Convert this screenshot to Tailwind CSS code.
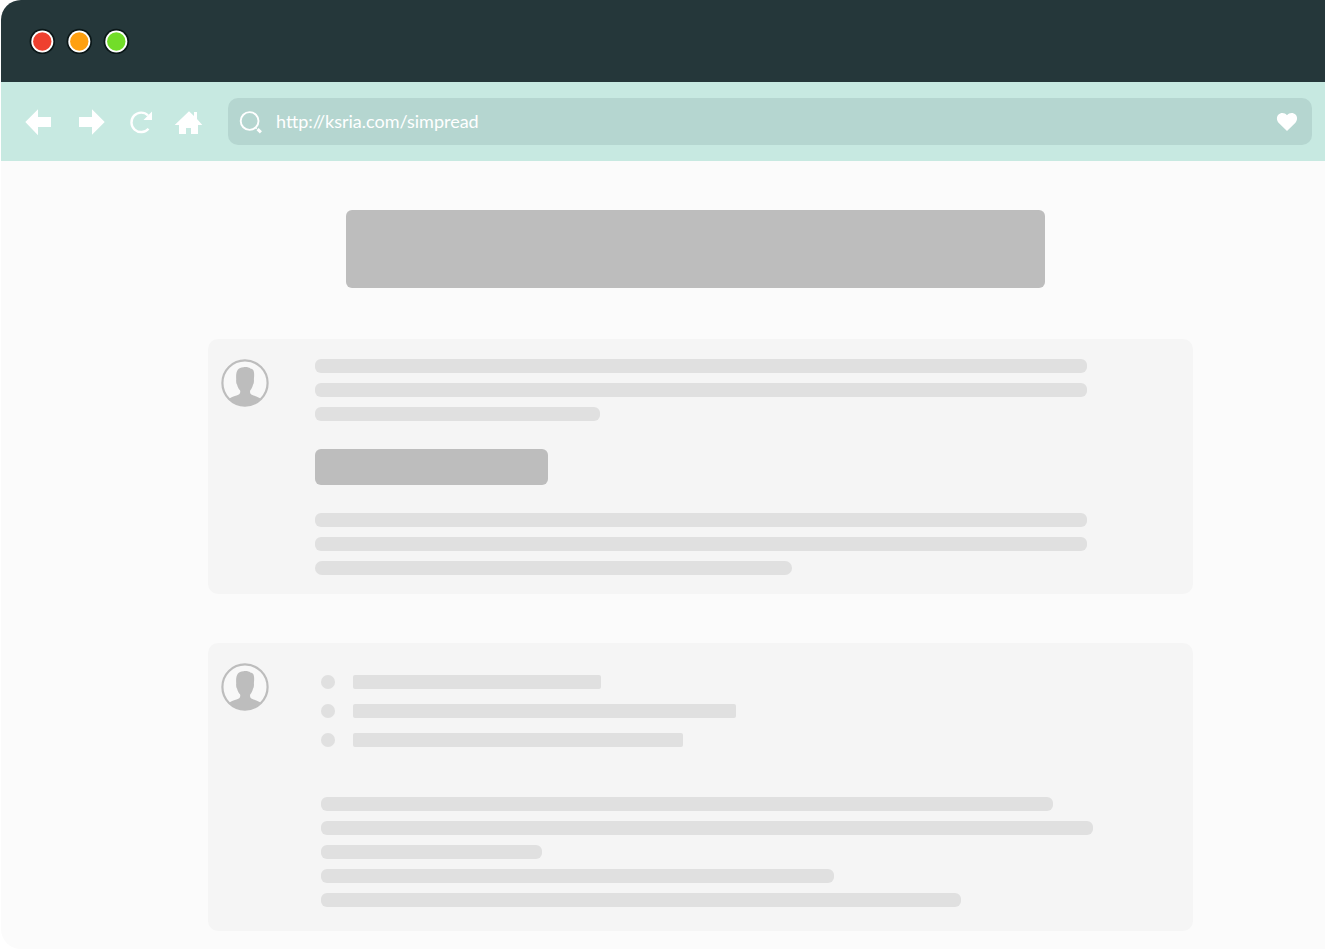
<!DOCTYPE html>
<html lang="en">
<head>
<meta charset="utf-8">
<meta name="viewport" content="width=device-width, initial-scale=1">
<title>SimpRead</title>
<script src="https://cdn.jsdelivr.net/npm/@tailwindcss/browser@4"></script>
</head>
<body class="bg-white pl-px font-['Lato',sans-serif]">
<svg class="hidden" aria-hidden="true">
  <symbol id="avatar" viewBox="0 0 48 48">
    <circle cx="24" cy="24" r="22.600" fill="#f8f8f8" stroke="#bdbdbd" stroke-width="2.200"/>
    <path fill="#bdbdbd" d="M8.500 39.500C11 37.800 15 36.800 17.800 35.600C19.400 34.500 19.500 32.500 19 31.300C17.600 30 16.500 28 16.100 25.800C15.200 24.800 15 22 15.200 20.300C14.700 12 16.500 8.800 22.500 8.200C25.500 7.800 28 8.300 29.300 9.600C32.800 10 33.700 12.500 32.900 20.300C33.100 22 32.900 24.800 32 25.800C31.600 28 30.500 30 29.300 31.300C28.800 32.500 28.900 34.500 30.300 35.600C33 36.800 37 37.800 39.500 39.500C35.500 44 30 46.800 24 46.800S12.500 44 8.500 39.500Z"/>
  </symbol>
</svg>
<div class="flex min-h-[949px] flex-col overflow-hidden rounded-l-[20px] bg-[#fbfbfb]">
  <header>
    <div class="flex h-[82px] items-center gap-[11px] bg-[#25373a] pl-7">
      <button type="button" aria-label="Close" class="size-[26px]"><svg viewBox="0 0 26 26" class="size-[26px]"><circle cx="13.300" cy="13.500" r="12.700" fill="#0b1718"/><circle cx="13.300" cy="13.500" r="11" fill="#fff"/><circle cx="13.300" cy="13.500" r="9.200" fill="#ef402f"/></svg></button>
      <button type="button" aria-label="Minimize" class="size-[26px]"><svg viewBox="0 0 26 26" class="size-[26px]"><circle cx="13.300" cy="13.500" r="12.700" fill="#0b1718"/><circle cx="13.300" cy="13.500" r="11" fill="#fff"/><circle cx="13.300" cy="13.500" r="9.200" fill="#ffa010"/></svg></button>
      <button type="button" aria-label="Maximize" class="size-[26px]"><svg viewBox="0 0 26 26" class="size-[26px]"><circle cx="13.300" cy="13.500" r="12.700" fill="#0b1718"/><circle cx="13.300" cy="13.500" r="11" fill="#fff"/><circle cx="13.300" cy="13.500" r="9.200" fill="#72dd29"/></svg></button>
    </div>
    <div class="flex h-[79px] items-center bg-[#c7e9e1] pr-[13px] pl-[23px]">
      <nav class="mr-[22px] flex shrink-0 gap-[18px]" aria-label="Browser">
        <button type="button" aria-label="Back" class="h-[31px] w-8"><svg viewBox="0 0 32 31" class="h-[31px] w-8 fill-white"><path d="M1.300 16L14 3.300V11H27V21H14V29.200Z"/></svg></button>
        <button type="button" aria-label="Forward" class="h-[31px] w-8"><svg viewBox="0 0 32 31" class="h-[31px] w-8 fill-white"><path d="M30.700 16L18 3.300V11H5V21H18V28.700Z"/></svg></button>
        <button type="button" aria-label="Reload" class="h-[31px] w-8"><svg viewBox="0 0 32 31" class="h-[31px] w-8"><path d="M24.500 22.700A9.700 9.700 0 1 1 24 9.500" fill="none" stroke="#fff" stroke-width="2.400"/><path d="M28 5.500V14H19.500Z" fill="#fff"/></svg></button>
        <button type="button" aria-label="Home" class="h-[31px] w-8"><svg viewBox="0 0 32 31" class="h-[31px] w-8 fill-white"><path d="M0.700 19L15 5.200L20 10V6H23V13L28.300 19H24V28H17V22H12V28H5V19Z"/></svg></button>
      </nav>
      <form class="flex h-[47px] min-w-0 flex-1 items-center rounded-[10px] bg-[#b5d6d0] pr-[14px] pl-[11px]">
        <label for="url" class="mr-[13px] shrink-0"><svg viewBox="0 0 24 24" class="size-6" fill="none" stroke="#fff" role="img" aria-label="Address"><circle cx="10.600" cy="11" r="8.900" stroke-width="1.900"/><path d="M16.800 17.800L18 19" stroke-width="1" stroke-opacity=".8"/><path d="M18.600 19.200L21.900 22.300" stroke-width="3"/></svg></label>
        <input id="url" type="url" value="http://ksria.com/simpread" class="min-w-0 flex-1 bg-transparent pb-[2px] text-lg text-white outline-none">
        <button type="button" aria-label="Favorite" class="size-[22px] shrink-0"><svg viewBox="0 0 22 22" class="size-[22px] fill-white"><path d="M11 20L2.800 12C0.300 9.300 0.500 5.800 2.300 3.800C4.800 1.200 8.800 1.500 11 4.300C13.200 1.500 17.200 1.200 19.700 3.800C21.500 5.800 21.700 9.300 19.200 12Z"/></svg></button>
      </form>
    </div>
  </header>
  <main class="pt-[49px] pr-[132px] pb-[18px] pl-[207px]">
    <div class="mr-[148px] ml-[138px] h-[78px] rounded-md bg-[#bdbdbd]"></div>
    <article class="mt-[51px] flex gap-[46px] rounded-[10px] bg-[#f5f5f5] px-[13px] pt-5 pb-[19px]">
      <svg class="size-12 shrink-0" role="img" aria-label="User"><use href="#avatar"/></svg>
      <div class="flex min-w-0 flex-1 flex-col gap-7">
        <div class="flex flex-col gap-[10px]">
          <div class="h-[14px] w-[772px] max-w-full rounded-md bg-[#e0e0e0]"></div>
          <div class="h-[14px] w-[772px] max-w-full rounded-md bg-[#e0e0e0]"></div>
          <div class="h-[14px] w-[285px] max-w-full rounded-md bg-[#e0e0e0]"></div>
        </div>
        <div class="h-9 w-[233px] max-w-full rounded-md bg-[#bdbdbd]"></div>
        <div class="flex flex-col gap-[10px]">
          <div class="h-[14px] w-[772px] max-w-full rounded-md bg-[#e0e0e0]"></div>
          <div class="h-[14px] w-[772px] max-w-full rounded-md bg-[#e0e0e0]"></div>
          <div class="h-[14px] w-[477px] max-w-full rounded-full bg-[#e0e0e0]"></div>
        </div>
      </div>
    </article>
    <article class="mt-[49px] flex gap-[52px] rounded-[10px] bg-[#f5f5f5] px-[13px] pt-5 pb-6">
      <svg class="size-12 shrink-0" role="img" aria-label="User"><use href="#avatar"/></svg>
      <div class="min-w-0 flex-1 pt-3">
        <ul class="flex flex-col gap-[15px]">
          <li class="flex gap-[18px]"><span class="size-[14px] shrink-0 rounded-full bg-[#e0e0e0]"></span><span class="h-[14px] w-[248px] rounded-xs bg-[#e0e0e0]"></span></li>
          <li class="flex gap-[18px]"><span class="size-[14px] shrink-0 rounded-full bg-[#e0e0e0]"></span><span class="h-[14px] w-[383px] rounded-xs bg-[#e0e0e0]"></span></li>
          <li class="flex gap-[18px]"><span class="size-[14px] shrink-0 rounded-full bg-[#e0e0e0]"></span><span class="h-[14px] w-[330px] rounded-xs bg-[#e0e0e0]"></span></li>
        </ul>
        <div class="mt-[50px] flex flex-col gap-[10px]">
          <div class="h-[14px] w-[732px] max-w-full rounded-md bg-[#e0e0e0]"></div>
          <div class="h-[14px] w-[772px] max-w-full rounded-md bg-[#e0e0e0]"></div>
          <div class="h-[14px] w-[221px] max-w-full rounded-md bg-[#e0e0e0]"></div>
          <div class="h-[14px] w-[513px] max-w-full rounded-md bg-[#e0e0e0]"></div>
          <div class="h-[14px] w-[640px] max-w-full rounded-md bg-[#e0e0e0]"></div>
        </div>
      </div>
    </article>
  </main>
</div>
</body>
</html>
